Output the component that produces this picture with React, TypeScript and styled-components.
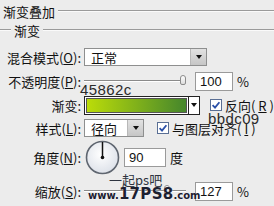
import styled, { createGlobalStyle } from "styled-components";

const GlobalStyle = createGlobalStyle`
  html, body {
    margin: 0;
    padding: 0;
    background: #ececec;
  }
  body {
    font-family: "Noto Sans CJK SC", "Liberation Sans", sans-serif;
    color: #111;
  }
`;

const Page = styled.div`
  position: relative;
  width: 274px;
  height: 206px;
  overflow: hidden;
  background: #ececec;
  font-size: 13px;
  line-height: 1;
`;

const LegendRow = styled.div<{ $h: number; $indent: number }>`
  display: flex;
  align-items: center;
  height: ${(p) => p.$h}px;
  padding-left: ${(p) => p.$indent}px;
  gap: 3px;
`;

const LegendText = styled.span`
  white-space: nowrap;
  font-size: 13px;
`;

const Rule = styled.div<{ $w?: number }>`
  flex: ${(p) => (p.$w ? `0 0 ${p.$w}px` : "1")};
  height: 0;
  border-top: 1px solid #9a9a9a;
  border-bottom: 1px solid #fafafa;
`;

const Row = styled.div<{ $h: number; $mt: number }>`
  display: flex;
  align-items: center;
  height: ${(p) => p.$h}px;
  margin-top: ${(p) => p.$mt}px;
`;

const Label = styled.label`
  flex: 0 0 81px;
  text-align: right;
  margin-right: 3px;
  white-space: nowrap;
  font-size: 13px;
`;

const Select = styled.div<{ $w: number }>`
  display: flex;
  width: ${(p) => p.$w}px;
  height: 18px;
  box-sizing: border-box;
  border: 1px solid #8e8f8f;
  background: #fff;
`;

const SelectText = styled.span`
  flex: 1;
  display: flex;
  align-items: center;
  padding-left: 6px;
  font-size: 13px;
`;

const DropButton = styled.span`
  flex: 0 0 15px;
  display: flex;
  align-items: center;
  justify-content: center;
  background: linear-gradient(#e2e2e2, #c6c6c6);
  border-left: 1px solid #b8b8b8;
  &::after {
    content: "";
    border-left: 3px solid transparent;
    border-right: 3px solid transparent;
    border-top: 4px solid #111;
  }
`;

const Slider = styled.div`
  position: relative;
  width: 102px;
  height: 14px;
`;

const Track = styled.div`
  position: absolute;
  left: 0;
  right: 0;
  top: 6px;
  border-top: 1px solid #8a8a8a;
  border-bottom: 1px solid #fff;
`;

const Thumb = styled.div`
  position: absolute;
  top: 1px;
  width: 6px;
  height: 10px;
  box-sizing: border-box;
  border: 1px solid #8c8c8c;
  border-radius: 3px 3px 2px 2px;
  background: linear-gradient(#ffffff, #dcdcdc);
`;

const NumberBox = styled.div<{ $w: number; $ml: number }>`
  width: ${(p) => p.$w}px;
  height: 19px;
  margin-left: ${(p) => p.$ml}px;
  box-sizing: border-box;
  border: 1px solid #9a9a9a;
  background: #fff;
  display: flex;
  align-items: center;
  padding-left: 4px;
  font-family: "Liberation Sans", sans-serif;
  font-size: 13px;
`;

const Unit = styled.span`
  margin-left: 4px;
  font-size: 13px;
`;

const GradientPicker = styled.div`
  display: flex;
  width: 123px;
  height: 19px;
  box-sizing: border-box;
  border: 1px solid #222;
  background: #fff;
`;

const GradientSwatch = styled.div`
  flex: 1;
  margin: 1px;
  border: 1px solid #555;
  background: linear-gradient(to right, #bbdc09, #45862c);
`;

const GradientArrow = styled.span`
  flex: 0 0 10px;
  display: flex;
  align-items: center;
  justify-content: center;
  border-left: 1px solid #222;
  &::after {
    content: "";
    border-left: 3px solid transparent;
    border-right: 3px solid transparent;
    border-top: 4px solid #111;
  }
`;

const CheckWrap = styled.span<{ $ml: number }>`
  display: flex;
  align-items: center;
  gap: 3px;
  margin-left: ${(p) => p.$ml}px;
  white-space: nowrap;
  font-size: 13px;
`;

const Dial = styled.svg`
  display: block;
  margin-left: 1px;
`;

const Note = styled.span<{ $x: number; $y: number }>`
  position: absolute;
  left: ${(p) => p.$x}px;
  top: ${(p) => p.$y}px;
  font-family: "Liberation Sans", sans-serif;
  font-size: 15px;
  letter-spacing: 0.4px;
  color: #2b2b2b;
  line-height: 1;
`;

const Watermark = styled.div`
  position: absolute;
  left: 88px;
  top: 173px;
  display: flex;
  flex-direction: column;
  align-items: flex-start;
  line-height: 1;
`;

const WatermarkTop = styled.span`
  margin-left: 21px;
  font-size: 13px;
  color: #2e3440;
`;

const WatermarkSite = styled.span`
  margin-top: 1px;
  font-family: "DejaVu Sans", sans-serif;
  font-weight: 900;
  color: #1c2030;
  text-shadow: 0 0 1px #fff;
  white-space: nowrap;
`;

const Small = styled.span`
  font-size: 10px;
`;

const Big = styled.span`
  font-size: 15px;
  letter-spacing: 0.3px;
`;

function Checkbox() {
  return (
    <svg width="12" height="12" viewBox="0 0 12 12">
      <rect x="0.5" y="0.5" width="11" height="11" fill="#fff" stroke="#5a6f94" />
      <path d="M2.6 6.2 L5 8.6 L9.4 3.2" fill="none" stroke="#2a50a8" strokeWidth="1.8" />
    </svg>
  );
}

function SliderControl({ value, min, max }: { value: number; min: number; max: number }) {
  const left = ((value - min) / (max - min)) * 96;
  return (
    <Slider>
      <Track />
      <Thumb style={{ left }} />
    </Slider>
  );
}

export default function App() {
  return (
    <Page>
      <GlobalStyle />
      <LegendRow $h={22} $indent={3}>
        <LegendText>渐变叠加</LegendText>
        <Rule />
      </LegendRow>
      <LegendRow $h={16} $indent={0}>
        <Rule $w={11} />
        <LegendText>渐变</LegendText>
        <Rule />
      </LegendRow>

      <Row $h={20} $mt={9}>
        <Label>
          混合模式(<u>O</u>):
        </Label>
        <Select $w={123}>
          <SelectText>正常</SelectText>
          <DropButton />
        </Select>
      </Row>

      <Row $h={20} $mt={4}>
        <Label>
          不透明度(<u>P</u>):
        </Label>
        <SliderControl value={100} min={0} max={100} />
        <NumberBox $w={38} $ml={9}>100</NumberBox>
        <Unit>%</Unit>
      </Row>

      <Row $h={20} $mt={4}>
        <Label>渐变:</Label>
        <GradientPicker>
          <GradientSwatch />
          <GradientArrow />
        </GradientPicker>
        <CheckWrap $ml={10}>
          <Checkbox />
          反向(<u>R</u>)
        </CheckWrap>
      </Row>

      <Row $h={20} $mt={3}>
        <Label>
          样式(<u>L</u>):
        </Label>
        <Select $w={60}>
          <SelectText>径向</SelectText>
          <DropButton />
        </Select>
        <CheckWrap $ml={13}>
          <Checkbox />
          与图层对齐(<u>I</u>)
        </CheckWrap>
      </Row>

      <Row $h={36} $mt={1}>
        <Label>
          角度(<u>N</u>):
        </Label>
        <Dial width="35" height="35" viewBox="0 0 35 35">
          <defs>
            <radialGradient id="dialFill" cx="0.45" cy="0.4" r="0.7">
              <stop offset="0" stopColor="#ffffff" />
              <stop offset="1" stopColor="#d8dde6" />
            </radialGradient>
          </defs>
          <circle cx="17.5" cy="17.5" r="16" fill="url(#dialFill)" stroke="#5f6670" strokeWidth="1.6" />
          <line x1="17.5" y1="17.5" x2="17.5" y2="2" stroke="#111" strokeWidth="1.5" />
          <circle cx="17.5" cy="17.5" r="1.8" fill="#111" />
        </Dial>
        <NumberBox $w={42} $ml={4}>90</NumberBox>
        <Unit>度</Unit>
      </Row>

      <Row $h={20} $mt={6}>
        <Label>
          缩放(<u>S</u>):
        </Label>
        <SliderControl value={127} min={10} max={150} />
        <NumberBox $w={38} $ml={9}>127</NumberBox>
        <Unit>%</Unit>
      </Row>

      <Note $x={80} $y={82}>45862c</Note>
      <Note $x={208} $y={111}>bbdc09</Note>
      <Watermark>
        <WatermarkTop>一起ps吧</WatermarkTop>
        <WatermarkSite>
          <Small>www.</Small>
          <Big>17PS8</Big>
          <Small>.com</Small>
        </WatermarkSite>
      </Watermark>
    </Page>
  );
}
